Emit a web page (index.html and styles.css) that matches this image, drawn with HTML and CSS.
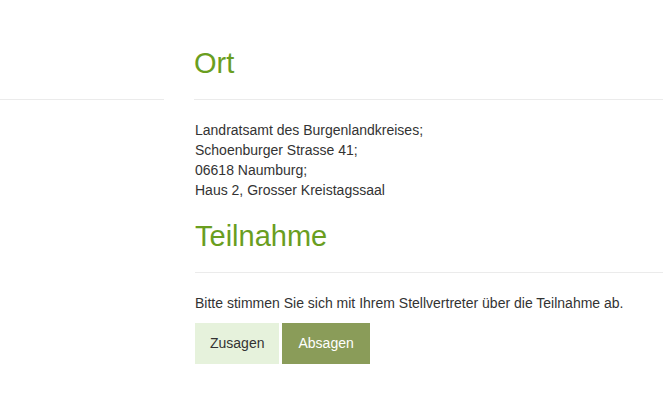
FILE: index.html
```
<!DOCTYPE html>
<html lang="de">
<head>
<meta charset="utf-8">
<title>Ort und Teilnahme</title>
<link rel="stylesheet" href="styles.css">
</head>
<body>
<div class="page">
  <div class="row">
    <div class="side"></div>
    <div class="main">
      <h2 class="title">Ort</h2>
    </div>
  </div>
  <div class="content">
    <p class="address">Landratsamt des Burgenlandkreises;<br>Schoenburger Strasse 41;<br>06618 Naumburg;<br>Haus 2, Grosser Kreistagssaal</p>
    <h2 class="title ruled">Teilnahme</h2>
    <p class="note">Bitte stimmen Sie sich mit Ihrem Stellvertreter über die Teilnahme ab.</p>
    <div class="actions">
      <button class="btn btn-yes" type="button">Zusagen</button>
      <button class="btn btn-no" type="button">Absagen</button>
    </div>
  </div>
</div>
</body>
</html>
```
FILE: styles.css
```
html, body {
  margin: 0;
  padding: 0;
  background: #ffffff;
}
body {
  font-family: "Liberation Sans", Arial, sans-serif;
  font-size: 14px;
  line-height: 20px;
  color: #333333;
}
.page {
  padding-top: 47px;
}
.row {
  display: flex;
  gap: 30px;
}
.side {
  width: 164px;
  border-bottom: 1px solid #ebebeb;
}
.main {
  flex: 1;
  border-bottom: 1px solid #ebebeb;
  padding-bottom: 20px;
}
.title {
  margin: 0;
  font-size: 29px;
  line-height: 32px;
  font-weight: normal;
  color: #6a9e1f;
}
.content {
  margin-left: 195px;
  padding-top: 20px;
}
.address {
  margin: 0 0 20px 0;
}
.ruled {
  border-bottom: 1px solid #ebebeb;
  padding-bottom: 20px;
}
.note {
  margin: 20px 0 10px 0;
}
.actions {
  display: flex;
  gap: 3px;
}
.btn {
  font-family: "Liberation Sans", Arial, sans-serif;
  font-size: 14px;
  line-height: 21px;
  padding: 10px 15px;
  border: 0;
  border-radius: 0;
  cursor: pointer;
}
.btn-yes {
  background: #e6f2dc;
  color: #333333;
}
.btn-no {
  background: #8a9c59;
  color: #ffffff;
  padding: 10px 16px;
}
```
